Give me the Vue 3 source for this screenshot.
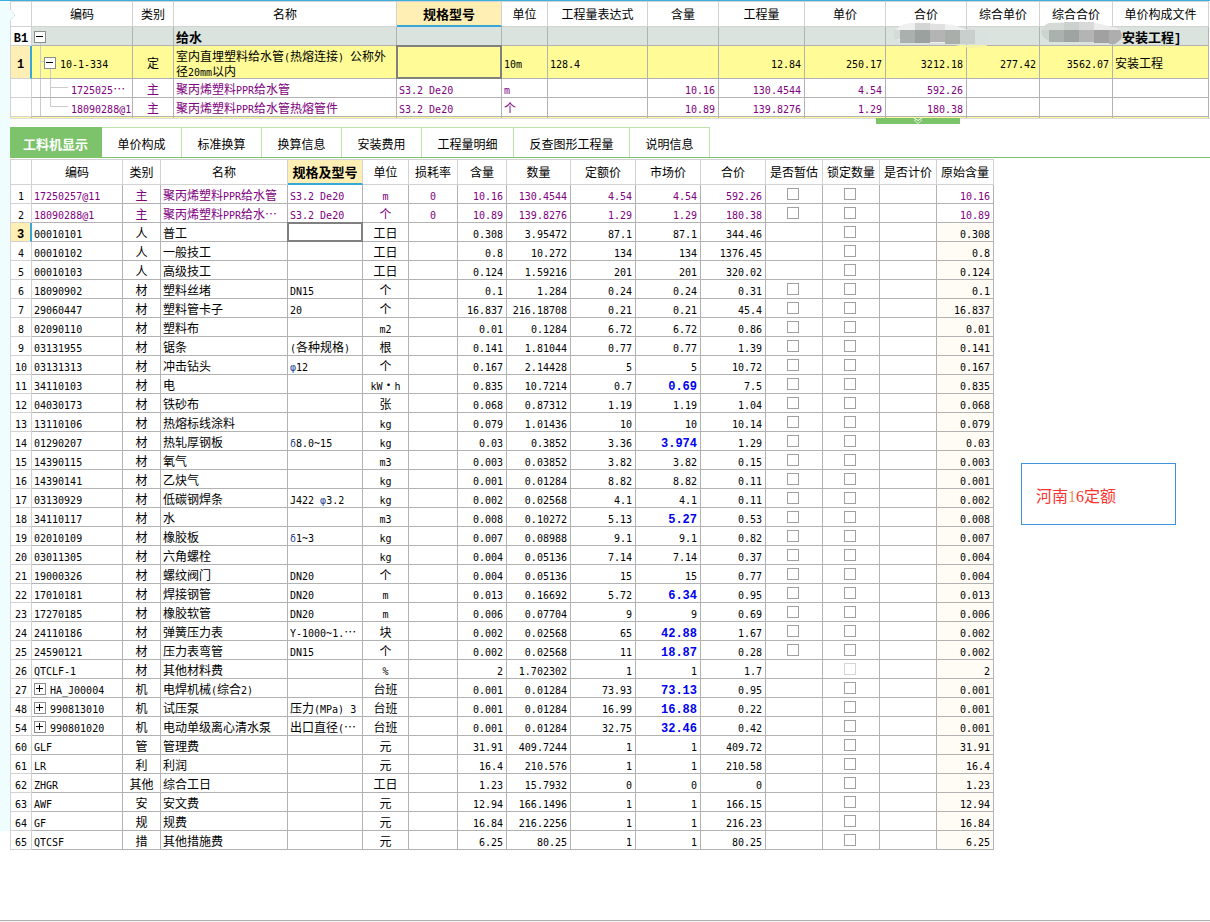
<script setup>
import { h, ref } from 'vue'

// Renders mixed text: half-width runs get the monospaced face, Greek signs a blue tint.
const Txt = (props) =>
  h(
    'span',
    { class: 'txt' },
    (String(props.v ?? '').match(/[\x20-\x7e]+|[φδ]|…|[^\x20-\x7eφδ…]+/g) || []).map((s) => {
      if (/^[\x20-\x7e]/.test(s)) return h('span', { class: 'en' }, s)
      if (/^[φδ]/.test(s)) return h('span', { class: 'en greek' }, s)
      if (s === '…') return h('span', { class: 'dots' }, s)
      return s
    })
  )
Txt.props = ['v']

const topCols = [
  { t: '', w: 'w21' },
  { t: '编码', w: 'w101' },
  { t: '类别', w: 'w41' },
  { t: '名称', w: 'w223' },
  { t: '规格型号', w: 'w105', on: true },
  { t: '单位', w: 'w46' },
  { t: '工程量表达式', w: 'w100' },
  { t: '含量', w: 'w71' },
  { t: '工程量', w: 'w86' },
  { t: '单价', w: 'w81' },
  { t: '合价', w: 'w81' },
  { t: '综合单价', w: 'w73' },
  { t: '综合合价', w: 'w73' },
  { t: '单价构成文件', w: 'auto' }
]
const topAlign = ['l', 'c', 'l', 'l', 'l', 'l', 'r', 'r', 'r', 'r', 'r', 'r', 'l']
const topRows = [
  { id: 'B1', cls: 'group', depth: 0, cells: ['', '', '给水', '', '', '', '', '', '', '', '', '', '安装工程]'] },
  {
    id: '1', cls: 'current', depth: 1,
    cells: ['10-1-334', '定', '室内直埋塑料给水管(热熔连接) 公称外\n径20mm以内', '', '10m', '128.4', '', '12.84', '250.17', '3212.18', '277.42', '3562.07', '安装工程']
  },
  { id: '', cls: 'main', depth: 2, cells: ['1725025…', '主', '聚丙烯塑料PPR给水管', 'S3.2 De20', 'm', '', '10.16', '130.4544', '4.54', '592.26', '', '', ''] },
  { id: '', cls: 'main', depth: 2, last: true, cells: ['18090288@1', '主', '聚丙烯塑料PPR给水管热熔管件', 'S3.2 De20', '个', '', '10.89', '139.8276', '1.29', '180.38', '', '', ''] }
]

const tabs = [
  { t: '工料机显示', w: 'w92' },
  { t: '单价构成', w: 'w80' },
  { t: '标准换算', w: 'w80' },
  { t: '换算信息', w: 'w80' },
  { t: '安装费用', w: 'w80' },
  { t: '工程量明细', w: 'w92' },
  { t: '反查图形工程量', w: 'w116' },
  { t: '说明信息', w: 'w80' }
]
const activeTab = ref(0)

const cols = [
  { t: '', w: 'w21' },
  { t: '编码', w: 'w91' },
  { t: '类别', w: 'w38' },
  { t: '名称', w: 'w127' },
  { t: '规格及型号', w: 'w75', on: true },
  { t: '单位', w: 'w46' },
  { t: '损耗率', w: 'w49' },
  { t: '含量', w: 'w49' },
  { t: '数量', w: 'w64' },
  { t: '定额价', w: 'w65' },
  { t: '市场价', w: 'w65' },
  { t: '合价', w: 'w65' },
  { t: '是否暂估', w: 'w57' },
  { t: '锁定数量', w: 'w57' },
  { t: '是否计价', w: 'w57' },
  { t: '原始含量', w: 'w57' }
]
// no | code | kind | name | spec | unit | loss | content | amount | quota | market | total
// "+" marks an expandable code, "*" an adjusted market price
const source = `1|17250257@11|主|聚丙烯塑料PPR给水管|S3.2 De20|m|0|10.16|130.4544|4.54|4.54|592.26
2|18090288@1|主|聚丙烯塑料PPR给水…|S3.2 De20|个|0|10.89|139.8276|1.29|1.29|180.38
3|00010101|人|普工||工日||0.308|3.95472|87.1|87.1|344.46
4|00010102|人|一般技工||工日||0.8|10.272|134|134|1376.45
5|00010103|人|高级技工||工日||0.124|1.59216|201|201|320.02
6|18090902|材|塑料丝堵|DN15|个||0.1|1.284|0.24|0.24|0.31
7|29060447|材|塑料管卡子|20|个||16.837|216.18708|0.21|0.21|45.4
8|02090110|材|塑料布||m2||0.01|0.1284|6.72|6.72|0.86
9|03131955|材|锯条|(各种规格)|根||0.141|1.81044|0.77|0.77|1.39
10|03131313|材|冲击钻头|φ12|个||0.167|2.14428|5|5|10.72
11|34110103|材|电||kW・h||0.835|10.7214|0.7|*0.69|7.5
12|04030173|材|铁砂布||张||0.068|0.87312|1.19|1.19|1.04
13|13110106|材|热熔标线涂料||kg||0.079|1.01436|10|10|10.14
14|01290207|材|热轧厚钢板|δ8.0~15|kg||0.03|0.3852|3.36|*3.974|1.29
15|14390115|材|氧气||m3||0.003|0.03852|3.82|3.82|0.15
16|14390141|材|乙炔气||kg||0.001|0.01284|8.82|8.82|0.11
17|03130929|材|低碳钢焊条|J422 φ3.2|kg||0.002|0.02568|4.1|4.1|0.11
18|34110117|材|水||m3||0.008|0.10272|5.13|*5.27|0.53
19|02010109|材|橡胶板|δ1~3|kg||0.007|0.08988|9.1|9.1|0.82
20|03011305|材|六角螺栓||kg||0.004|0.05136|7.14|7.14|0.37
21|19000326|材|螺纹阀门|DN20|个||0.004|0.05136|15|15|0.77
22|17010181|材|焊接钢管|DN20|m||0.013|0.16692|5.72|*6.34|0.95
23|17270185|材|橡胶软管|DN20|m||0.006|0.07704|9|9|0.69
24|24110186|材|弹簧压力表|Y-1000~1.…|块||0.002|0.02568|65|*42.88|1.67
25|24590121|材|压力表弯管|DN15|个||0.002|0.02568|11|*18.87|0.28
26|QTCLF-1|材|其他材料费||%||2|1.702302|1|1|1.7
27|+HA_J00004|机|电焊机械(综合2)||台班||0.001|0.01284|73.93|*73.13|0.95
48|+990813010|机|试压泵|压力(MPa) 3|台班||0.001|0.01284|16.99|*16.88|0.22
54|+990801020|机|电动单级离心清水泵|出口直径(…|台班||0.001|0.01284|32.75|*32.46|0.42
60|GLF|管|管理费||元||31.91|409.7244|1|1|409.72
61|LR|利|利润||元||16.4|210.576|1|1|210.58
62|ZHGR|其他|综合工日||工日||1.23|15.7932|0|0|0
63|AWF|安|安文费||元||12.94|166.1496|1|1|166.15
64|GF|规|规费||元||16.84|216.2256|1|1|216.23
65|QTCSF|措|其他措施费||元||6.25|80.25|1|1|80.25`

const rows = source.split('\n').map((line) => {
  const f = line.split('|')
  const n = Number(f[0])
  return {
    no: f[0],
    expandable: f[1].startsWith('+'),
    code: f[1].replace('+', ''),
    kind: f[2],
    name: f[3],
    spec: f[4],
    unit: f[5],
    loss: f[6],
    content: f[7],
    amount: f[8],
    quota: f[9],
    market: f[10].replace('*', ''),
    adjusted: f[10].startsWith('*'),
    total: f[11],
    main: n < 3,
    current: n === 3,
    estimate: n < 3 || (n > 5 && n < 26),
    lockDisabled: n === 26
  }
})
</script>

<template>
  <div class="page">
    <div class="body">
      <aside class="rail">
        <svg class="pointer" width="6" height="12" viewBox="0 0 6 12">
          <path d="M0 0 L5 6 L0 12 Z" fill="#f0fdff" />
          <path d="M0 0 L5 6 L0 12" fill="none" stroke="#c8ccd0" stroke-dasharray="1 1" />
        </svg>
      </aside>
      <main class="main">
        <div class="top">
          <table class="grid top-grid">
            <colgroup><col v-for="(c, i) in topCols" :key="i" :class="c.w" /></colgroup>
            <thead>
              <tr>
                <th v-for="(c, i) in topCols" :key="i" scope="col" :class="{ on: c.on }">{{ c.t }}</th>
              </tr>
            </thead>
            <tbody>
              <tr v-for="(r, ri) in topRows" :key="ri" :class="r.cls">
                <th scope="row" class="no"><Txt :v="r.id" /></th>
                <td v-for="(v, i) in r.cells" :key="i" :class="[topAlign[i], { pick: r.cls === 'current' && i === 3, file: i === 12 }]">
                  <template v-if="i === 0">
                    <svg class="lines" width="40" height="33" viewBox="0 0 40 33" fill="none" stroke="#cbcbcb">
                      <path v-if="r.depth === 0" d="M8.5 15V18" />
                      <path v-else-if="r.depth === 1" d="M8.5 0V32M8.5 15.5H12M18.5 22V32" />
                      <path v-else-if="!r.last" d="M8.5 0V18M18.5 0V18M18 8.5H36" />
                      <path v-else d="M8.5 0V18M18.5 0V8.5H36" />
                    </svg>
                    <div class="node" :class="'d' + r.depth">
                      <button v-if="r.depth < 2" class="toggle" type="button" aria-label="折叠">
                        <svg width="10" height="10" viewBox="0 0 10 10"><path d="M1 4.5H8" stroke="#000" /></svg>
                      </button>
                      <Txt :v="v" />
                    </div>
                  </template>
                  <Txt v-else :v="v" />
                </td>
              </tr>
              <tr class="sliver" aria-hidden="true"><td v-for="(c, i) in topCols" :key="i"></td></tr>
            </tbody>
          </table>
          <svg class="smudge one" width="94" height="28" viewBox="0 0 94 28">
            <path d="M6 4Q16 -1 34 1L60 3L80 10L94 10Q94 20 80 21H50L8 21Q-4 12 6 4Z" fill="#eeefee" />
            <rect x="21" y="1" width="15" height="7" fill="#d3d5d4" />
            <rect x="36" y="2" width="15" height="6" fill="#e0e0e0" />
            <path d="M66 8H94V22H81L66 20Z" fill="#d9e2de" />
            <rect x="0" y="8" width="6" height="9" fill="#d5dbd8" />
            <rect x="6" y="8" width="15" height="13" fill="#a9b0ad" />
            <rect x="21" y="8" width="15" height="13" fill="#9ba19e" />
            <rect x="36" y="8" width="15" height="12" fill="#b4b4b4" />
            <rect x="51" y="8" width="15" height="14" fill="#a9aeab" />
            <rect x="66" y="8" width="15" height="14" fill="#c9cfcc" />
            <path d="M61 23H93Q92 26 76 26Z" fill="#f5f2a4" />
          </svg>
          <svg class="smudge two" width="82" height="24" viewBox="0 0 82 24">
            <path d="M8 1Q30 -1 55 1L76 6Q84 12 78 19L70 22L60 20L8 19Q-4 10 8 1Z" fill="#ececec" />
            <path d="M8 1H23V8H1Q2 3 8 1Z" fill="#d5dad7" />
            <rect x="23" y="0" width="15" height="8" fill="#cbd2ce" />
            <rect x="38" y="0" width="15" height="8" fill="#d8d9d8" />
            <path d="M0 8H8V19Q0 16 0 8Z" fill="#ccd4d0" />
            <rect x="8" y="8" width="15" height="12" fill="#aab1ae" />
            <rect x="23" y="8" width="15" height="12" fill="#9da4a1" />
            <rect x="38" y="8" width="15" height="12" fill="#b4b4b4" />
            <rect x="53" y="8" width="15" height="13" fill="#a2a1a1" />
            <path d="M68 8H79Q83 15 78 19L74 22H68Z" fill="#aeaeae" />
          </svg>
        </div>

        <div class="splitter">
          <button class="handle" type="button" aria-label="收起">
            <svg width="12" height="6" viewBox="0 0 12 6" fill="none">
              <path d="M2 0L6 2.5L10 0" stroke="#fff" />
              <path d="M2 2L6 5.5L10 2" stroke="#d8f2cf" />
            </svg>
          </button>
        </div>

        <nav class="tabs">
          <button v-for="(t, i) in tabs" :key="i" type="button" class="tab" :class="[t.w, { active: i === activeTab }]" @click="activeTab = i">{{ t.t }}</button>
        </nav>

        <div class="detail">
          <table class="grid low-grid">
            <colgroup><col v-for="(c, i) in cols" :key="i" :class="c.w" /></colgroup>
            <thead>
              <tr>
                <th v-for="(c, i) in cols" :key="i" scope="col" :class="{ on: c.on }">{{ c.t }}</th>
              </tr>
            </thead>
            <tbody>
              <tr v-for="r in rows" :key="r.no" :class="{ main: r.main, picked: r.current }">
                <th scope="row" class="no"><Txt :v="r.no" /></th>
                <td class="l">
                  <div class="node">
                    <button v-if="r.expandable" class="toggle" type="button" aria-label="展开">
                      <svg width="10" height="10" viewBox="0 0 10 10"><path d="M1 4.5H8M4.5 1V8" stroke="#000" /></svg>
                    </button>
                    <Txt :v="r.code" />
                  </div>
                </td>
                <td class="c"><Txt :v="r.kind" /></td>
                <td class="l"><Txt :v="r.name" /></td>
                <td class="l" :class="{ pick: r.current }"><Txt :v="r.spec" /></td>
                <td class="c"><Txt :v="r.unit" /></td>
                <td class="c"><Txt :v="r.loss" /></td>
                <td class="r"><Txt :v="r.content" /></td>
                <td class="r"><Txt :v="r.amount" /></td>
                <td class="r"><Txt :v="r.quota" /></td>
                <td class="r" :class="{ adjusted: r.adjusted }"><Txt :v="r.market" /></td>
                <td class="r"><Txt :v="r.total" /></td>
                <td class="check"><input v-if="r.estimate" type="checkbox" :aria-label="'是否暂估 ' + r.no" /></td>
                <td class="check"><input type="checkbox" :disabled="r.lockDisabled" :aria-label="'锁定数量 ' + r.no" /></td>
                <td></td>
                <td class="r origin"><Txt :v="r.content" /></td>
              </tr>
            </tbody>
          </table>
          <div class="note">河南<span class="first">1</span>6定额</div>
        </div>
      </main>
    </div>
    <footer class="foot"></footer>
  </div>
</template>

<style>
body {
  margin: 0;
  background: #fff;
}
</style>

<style scoped>
* {
  box-sizing: border-box;
}
.page {
  min-height: 100vh;
  display: flex;
  flex-direction: column;
  border-top: 1px solid #3cb0dc;
  background: #fff;
  color: #000;
  font: 12px/16px "Noto Sans CJK SC", "Noto Sans", sans-serif;
}
.body {
  flex: 1;
  display: flex;
}
.rail {
  flex: none;
  width: 10px;
  margin-bottom: 89px;
  background: #f0fdff;
  position: relative;
}
.pointer {
  position: absolute;
  left: 10px;
  top: 8px;
  z-index: 1;
}
.main {
  flex: 1;
  min-width: 0;
}
.foot {
  height: 2px;
  border-top: 1px solid #b0b0b0;
  background: #f2f2f2;
}
.top {
  position: relative;
  border-bottom: 1px solid #dcdcdc;
}
.grid {
  table-layout: fixed;
  border-collapse: separate;
  border-spacing: 0;
  border-top: 1px solid #d2d2d2;
  border-left: 1px solid #d2d2d2;
}
.top-grid {
  width: calc(100% - 1px);
}
.low-grid {
  flex: none;
  width: 984px;
}
.w21 { width: 21px; }
.w38 { width: 38px; }
.w41 { width: 41px; }
.w46 { width: 46px; }
.w49 { width: 49px; }
.w57 { width: 57px; }
.w64 { width: 64px; }
.w65 { width: 65px; }
.w71 { width: 71px; }
.w73 { width: 73px; }
.w75 { width: 75px; }
.w80 { width: 80px; }
.w81 { width: 81px; }
.w86 { width: 86px; }
.w91 { width: 91px; }
.w92 { width: 92px; }
.w100 { width: 100px; }
.w101 { width: 101px; }
.w105 { width: 105px; }
.w116 { width: 116px; }
.w127 { width: 127px; }
.w223 { width: 223px; }

thead th {
  height: 25px;
  padding: 0;
  border-right: 1px solid #d2d2d2;
  border-bottom: 1px solid #d2d2d2;
  font-weight: 400;
  line-height: 16px;
  white-space: nowrap;
}
thead th.on {
  background: #ffefb5;
  border-bottom: 2px solid #37a8d6;
  font-size: 13px;
  font-weight: 700;
}
tbody td,
tbody th {
  height: 19px;
  padding: 1px 0 0;
  border-right: 1px solid #b2b2b2;
  border-bottom: 1px solid #b2b2b2;
  line-height: 16px;
  white-space: nowrap;
  position: relative;
}
tbody th.no {
  border-color: #d2d2d2;
  font-weight: 400;
  text-align: center;
}
td.l {
  padding-left: 2px;
  text-align: left;
}
td.c {
  text-align: center;
}
td.r {
  padding-right: 3px;
  text-align: right;
}
.txt {
  white-space: pre;
}
:deep(.en) {
  font-family: "DejaVu Sans Mono", "Liberation Mono", monospace;
  font-size: 10px;
  line-height: 10px;
}
:deep(.greek) {
  color: #1c3f94;
}
:deep(.dots) {
  display: inline-block;
}
.main tr.main td {
  color: #800080;
}
.group td {
  background: #dae3de;
  font-size: 13px;
  font-weight: 700;
}
.group td.file {
  padding-left: 9px;
}
.group th.no,
.current th.no,
.picked th.no {
  font-weight: 700;
}
.current td {
  height: 33px;
  background: #fffc98;
  line-height: 15px;
}
.current th.no,
.picked th.no {
  background: #ffefb5;
  border-right: 2px solid #37a8d6;
}
.group :deep(.en),
.current .no :deep(.en),
.picked .no :deep(.en),
.adjusted :deep(.en) {
  font-family: "Liberation Mono", monospace;
  font-size: 12px;
  font-weight: 700;
}
.adjusted {
  color: #0000f0;
}
.sliver td {
  height: 1px;
  padding: 0;
  border-bottom: 0;
  background: #fffc98;
}
.pick::after {
  content: "";
  position: absolute;
  inset: -1px;
  border: 2px solid #808080;
  z-index: 1;
}
.lines {
  position: absolute;
  left: 0;
  top: 0;
}
.node {
  display: flex;
  align-items: center;
  gap: 4px;
  position: relative;
}
.node.d1 {
  padding-left: 10px;
}
.node.d2 {
  padding-left: 37px;
}
.toggle {
  flex: none;
  width: 12px;
  height: 12px;
  padding: 0;
  border: 1px solid #8c8c8c;
  background: #fff;
}
.toggle svg {
  display: block;
}
.smudge {
  position: absolute;
  z-index: 2;
}
.smudge.one {
  right: 222px;
  top: 21px;
}
.smudge.two {
  right: 87px;
  top: 21px;
}
.splitter {
  height: 8px;
  display: flex;
  justify-content: flex-end;
  padding-right: 250px;
}
.handle {
  width: 84px;
  height: 6px;
  margin-top: -1px;
  padding: 0;
  border: 0;
  background: #7dc36b;
  display: flex;
  justify-content: center;
  position: relative;
}
.tabs {
  display: flex;
  border-bottom: 1px solid #7dc36b;
}
.tab {
  height: 30px;
  padding: 3px 0 0;
  border: 0;
  border-top: 1px solid #b9e3a8;
  border-right: 1px solid #b9e3a8;
  background: #fff;
  color: #000;
  font: inherit;
  text-align: center;
  white-space: nowrap;
}
.tab.active {
  border-color: #7dc36b;
  background: #7dc36b;
  color: #fff;
  font-size: 13px;
  font-weight: 700;
}
.detail {
  display: flex;
  align-items: flex-start;
  margin-top: 1px;
}
td.check {
  padding-right: 2px;
}
td.check input {
  display: block;
  appearance: none;
  width: 12px;
  height: 12px;
  margin: 0 auto 1px;
  border: 1px solid #a0a0a0;
  background: #fff;
}
td.check input:disabled {
  border-color: #d4d4d4;
}
.origin {
  background: #fffbf5;
}
.main tr.main td.origin {
  background: #fff;
}
.note {
  width: 155px;
  margin: 304px 0 0 27px;
  padding: 22px 14px 16px;
  border: 1px solid #3f93dc;
  color: #ff3430;
  font: 16px/22px "Liberation Serif", "Noto Sans CJK SC", serif;
  white-space: nowrap;
}
.note .first {
  color: #e8955a;
}
</style>
